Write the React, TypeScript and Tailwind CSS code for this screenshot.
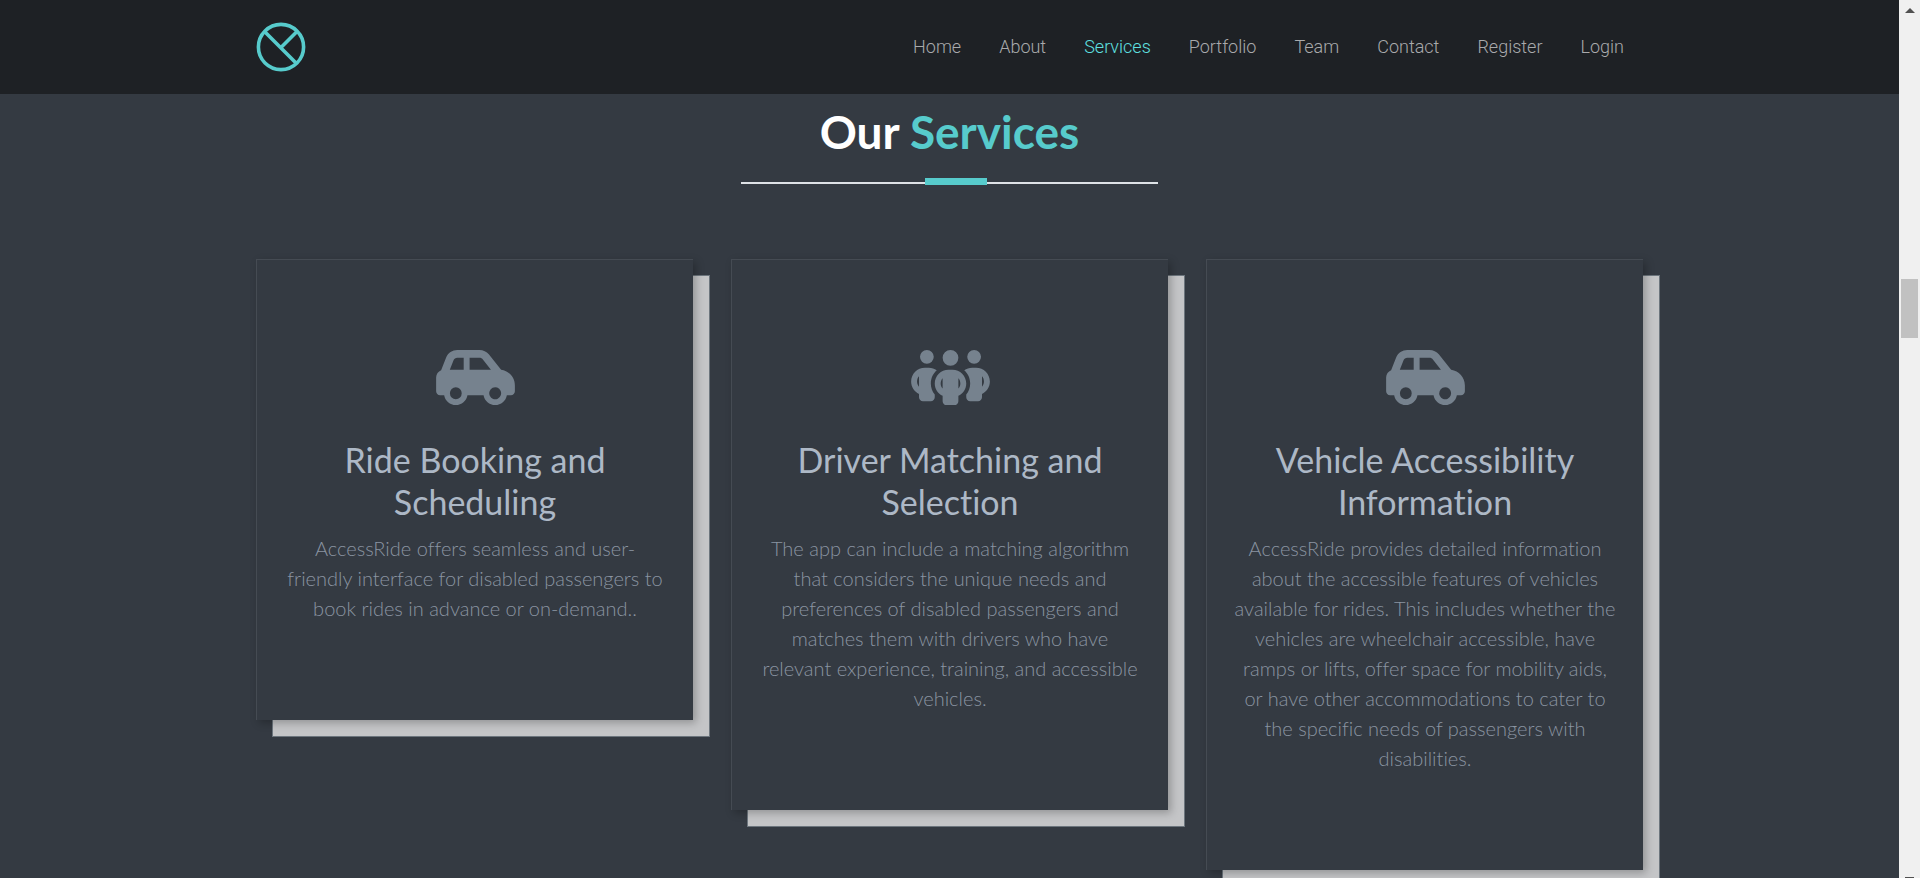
import React from "react";
import { FaCarSide, FaPeopleGroup } from "react-icons/fa6";
import type { IconType } from "react-icons";

const links = ["Home", "About", "Services", "Portfolio", "Team", "Contact", "Register", "Login"];

interface Service {
  icon: IconType;
  title: string;
  text: string;
}

const services: Service[] = [
  {
    icon: FaCarSide,
    title: "Ride Booking and Scheduling",
    text: "AccessRide offers seamless and user-friendly interface for disabled passengers to book rides in advance or on-demand..",
  },
  {
    icon: FaPeopleGroup,
    title: "Driver Matching and Selection",
    text: "The app can include a matching algorithm that considers the unique needs and preferences of disabled passengers and matches them with drivers who have relevant experience, training, and accessible vehicles.",
  },
  {
    icon: FaCarSide,
    title: "Vehicle Accessibility Information",
    text: "AccessRide provides detailed information about the accessible features of vehicles available for rides. This includes whether the vehicles are wheelchair accessible, have ramps or lifts, offer space for mobility aids, or have other accommodations to cater to the specific needs of passengers with disabilities.",
  },
];

function Logo() {
  return (
    <svg viewBox="0 0 50 50" className="size-[50px]" fill="none" stroke="#57cbcc" strokeWidth="3.6" aria-hidden="true">
      <circle cx="25" cy="25" r="22.6" />
      <path d="M8.5 9.5 L40.5 41.5 M41 9.5 L25 25.5" />
    </svg>
  );
}

function Header() {
  return (
    <header className="flex h-[94px] shrink-0 items-center justify-between bg-[#1e2125] px-64">
      <a href="#home" aria-label="Home page">
        <Logo />
      </a>
      <nav className="flex font-['Roboto',sans-serif] text-lg font-light">
        {links.map((name) => (
          <a
            key={name}
            href={"#" + name.toLowerCase()}
            className={name === "Services" ? "px-[19px] text-[#5fe0e0]" : "px-[19px] text-[#a9aaac]"}
          >
            {name}
          </a>
        ))}
      </nav>
    </header>
  );
}

function Card({ icon: Icon, title, text }: Service) {
  return (
    <article className="relative isolate">
      <div className="absolute top-4 -right-[17px] -bottom-[17px] left-4 -z-10 border border-[#6c757d] bg-[#c4c5c7]" />
      <div className="flex flex-col items-center border-t border-l border-[#454b53] bg-[#343a42] px-[26px] pt-[86px] pb-[97px] text-center shadow-[3px_3px_8px_rgba(0,0,0,0.25)]">
        <Icon className="h-[63px] w-[79px] text-[#76828e]" />
        <h3 className="mt-[30px] text-[34px] leading-[42px] text-[#adb8c6]">{title}</h3>
        <p className="mt-[10px] text-xl leading-[30px] font-light text-[#8a94a1]">{text}</p>
      </div>
    </article>
  );
}

function Scrollbar() {
  return (
    <div className="flex w-[21px] shrink-0 flex-col items-center bg-[#f0f0f0]" aria-hidden="true">
      <svg viewBox="0 0 10 5" className="mt-2 h-[5px] w-[10px]" fill="#505050">
        <path d="M0 5 L5 0 L10 5 Z" />
      </svg>
      <div className="mt-[266px] h-[59px] w-[17px] bg-[#c1c1c1]" />
      <div className="mt-auto h-px w-[9px] bg-[#505050]" />
    </div>
  );
}

export default function App() {
  return (
    <div className="flex h-screen overflow-hidden bg-[#343a42] font-['Lato',sans-serif] [font-variant-ligatures:none]">
      <div className="flex min-w-0 flex-1 flex-col overflow-hidden">
        <Header />
        <main className="px-64">
          <div className="mx-auto flex w-[417px] flex-col items-center pt-[11px]">
            <h2 className="text-[46px] leading-[54px] font-bold text-white">
              Our <span className="text-[#57cbcc]">Services</span>
            </h2>
            <div className="relative mt-[23px] h-0.5 w-full bg-[#dee2e6]">
              <span className="absolute -top-1 left-[184px] h-[7px] w-[62px] bg-[#57cbcc]" />
            </div>
          </div>
          <section className="mt-[75px] grid grid-cols-3 items-start gap-[38px] pb-12">
            {services.map((service) => (
              <Card key={service.title} {...service} />
            ))}
          </section>
        </main>
      </div>
      <Scrollbar />
    </div>
  );
}
